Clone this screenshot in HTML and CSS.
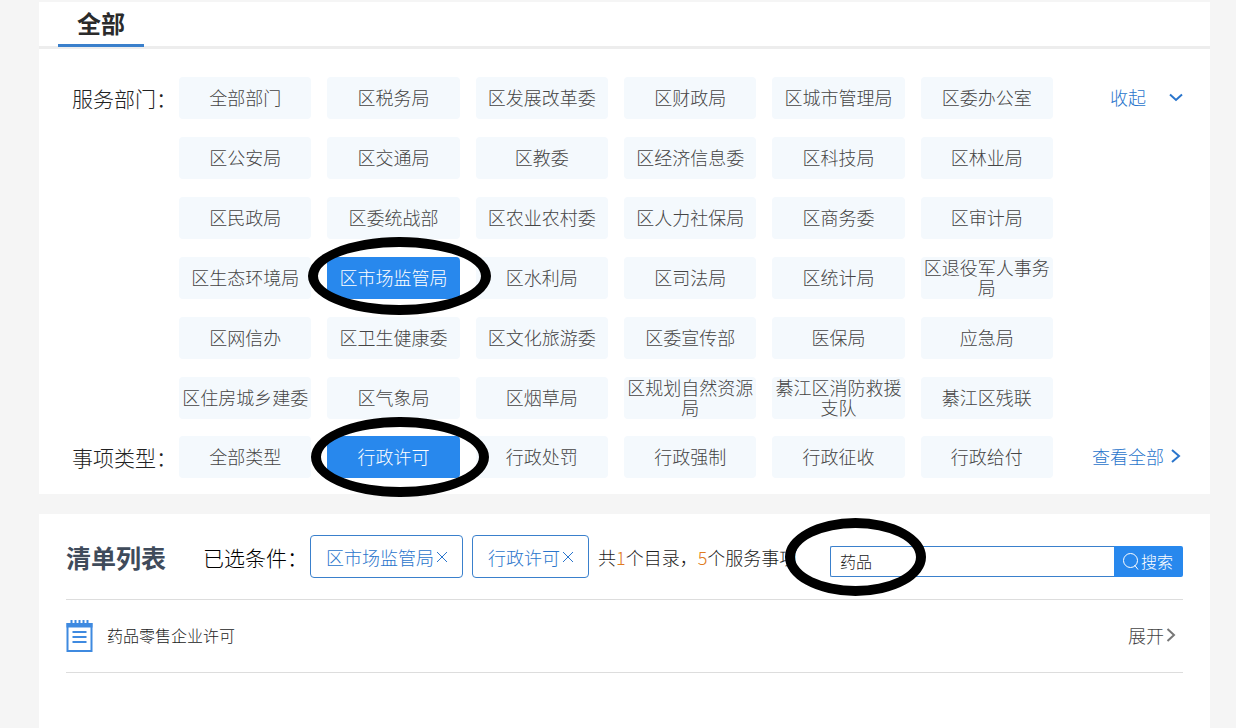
FILE: index.html
```html
<!DOCTYPE html>
<html lang="zh-CN">
<head>
  <meta charset="UTF-8" />
  <meta name="viewport" content="width=device-width, initial-scale=1" />
  <title>服务事项清单</title>
  <link rel="stylesheet" href="styles.css">
</head>
<body>
  <section class="panel">
    <nav class="tabs">
      <a href="#" class="tab">全部</a>
    </nav>

    <div class="filters">
      <div class="filter-row">
        <div class="filter-label">服务部门：</div>
        <div class="chips">
          <button class="chip">全部部门</button>
          <button class="chip">区税务局</button>
          <button class="chip">区发展改革委</button>
          <button class="chip">区财政局</button>
          <button class="chip">区城市管理局</button>
          <button class="chip">区委办公室</button>
          <button class="chip">区公安局</button>
          <button class="chip">区交通局</button>
          <button class="chip">区教委</button>
          <button class="chip">区经济信息委</button>
          <button class="chip">区科技局</button>
          <button class="chip">区林业局</button>
          <button class="chip">区民政局</button>
          <button class="chip">区委统战部</button>
          <button class="chip">区农业农村委</button>
          <button class="chip">区人力社保局</button>
          <button class="chip">区商务委</button>
          <button class="chip">区审计局</button>
          <button class="chip">区生态环境局</button>
          <button class="chip active mark mark-dept">区市场监管局</button>
          <button class="chip">区水利局</button>
          <button class="chip">区司法局</button>
          <button class="chip">区统计局</button>
          <button class="chip">区退役军人事务局</button>
          <button class="chip">区网信办</button>
          <button class="chip">区卫生健康委</button>
          <button class="chip">区文化旅游委</button>
          <button class="chip">区委宣传部</button>
          <button class="chip">医保局</button>
          <button class="chip">应急局</button>
          <button class="chip">区住房城乡建委</button>
          <button class="chip">区气象局</button>
          <button class="chip">区烟草局</button>
          <button class="chip">区规划自然资源局</button>
          <button class="chip">綦江区消防救援支队</button>
          <button class="chip">綦江区残联</button>
        </div>
        <a href="#" class="more more-fold">收起
          <svg width="14" height="14" viewBox="0 0 14 14"><path d="M1 4.500L7 10L13 4.500" /></svg>
        </a>
      </div>

      <div class="filter-row">
        <div class="filter-label">事项类型：</div>
        <div class="chips">
          <button class="chip">全部类型</button>
          <button class="chip active mark mark-type">行政许可</button>
          <button class="chip">行政处罚</button>
          <button class="chip">行政强制</button>
          <button class="chip">行政征收</button>
          <button class="chip">行政给付</button>
        </div>
        <a href="#" class="more">查看全部
          <svg width="14" height="14" viewBox="0 0 14 14"><path d="M3 1L10 7L3 13" /></svg>
        </a>
      </div>
    </div>
  </section>

  <section class="panel list-panel">
    <div class="list-head">
      <h2>清单列表</h2>
      <span class="selected-label">已选条件：</span>
      <button class="tag">区市场监管局
        <svg width="12" height="12" viewBox="0 0 12 12"><path d="M1 1L11 11M11 1L1 11" /></svg>
      </button>
      <button class="tag">行政许可
        <svg width="12" height="12" viewBox="0 0 12 12"><path d="M1 1L11 11M11 1L1 11" /></svg>
      </button>
      <span class="count">共<em>1</em>个目录，<em>5</em>个服务事项</span>
      <form class="search mark mark-search">
        <input type="text" value="药品" aria-label="搜索关键词">
        <button type="button">
          <svg width="18" height="18" viewBox="0 0 18 18"><circle cx="8.5" cy="8.5" r="7" /><path d="M12.500 13L16 17.500" /></svg>搜索
        </button>
      </form>
    </div>

    <div class="item">
      <svg class="item-icon" width="28" height="34" viewBox="0 0 28 34">
        <path d="M1.500 5H25.500V32H1.500Z" />
        <path class="top" d="M0.500 4H26.500V8.500H0.500Z" />
        <path class="rings" d="M5.500 1V7M9.500 1V7M13.500 1V7M17.500 1V7M21.500 1V7" />
        <path d="M6.500 13H20.500M6.500 18H20.500M6.500 23H20.500" />
      </svg>
      <a href="#" class="item-name">药品零售企业许可</a>
      <a href="#" class="expand">展开
        <svg width="10" height="14" viewBox="0 0 10 14"><path d="M1.500 1L8 7L1.500 13" /></svg>
      </a>
    </div>
  </section>
</body>
</html>
```

FILE: styles.css
```css
*, *::after {
  box-sizing: border-box;
}
body {
  margin: 0;
  padding: 2px 26px 0 39px;
  background: #f5f5f5;
  font-family: "Noto Sans CJK SC", sans-serif;
  font-weight: 300;
  font-size: 18px;
  color: #222;
}
a {
  text-decoration: none;
}
button, input {
  font: inherit;
}
button {
  cursor: pointer;
}
svg {
  flex: none;
  fill: none;
  stroke: currentColor;
}
.panel {
  background: #fff;
}

/* tabs */
.tabs {
  display: flex;
  height: 47px;
  padding-left: 19px;
  border-bottom: 3px solid #ededed;
}
.tab {
  height: 45px;
  padding: 0 19px;
  border-bottom: 3px solid #3a80cc;
  font-size: 24px;
  font-weight: bold;
  line-height: 42px;
  color: #2b2b2b;
}

/* filters */
.filters {
  display: flex;
  flex-direction: column;
  gap: 17px;
  padding: 28px 26px 16px 33px;
}
.filter-row {
  display: flex;
  align-items: flex-start;
}
.filter-label {
  width: 107px;
  font-size: 21px;
  line-height: 42px;
  white-space: nowrap;
}
.chips {
  flex: 1;
  display: grid;
  grid-template-columns: repeat(6, 1fr);
  gap: 18px 16px;
}
.chip {
  height: 42px;
  padding: 0 2px 3px;
  border: 0;
  border-radius: 4px;
  background: #f4f9fd;
  color: #444;
  line-height: 20px;
}
.chip.active {
  background: #2888ed;
  color: #fff;
}
.more {
  display: flex;
  justify-content: flex-end;
  align-items: center;
  gap: 5px;
  width: 131px;
  height: 42px;
  padding: 0 1px 3px 0;
  color: #2a75cc;
}
.more-fold {
  gap: 23px;
}
.more svg {
  stroke-width: 2;
}

/* circles drawn round the picked options */
.mark {
  position: relative;
}
.mark::after {
  content: "";
  position: absolute;
  z-index: 1;
  border: 10px solid #000;
  border-radius: 50%;
  pointer-events: none;
}
.mark-dept::after {
  inset: -20px -31px -16px -19px;
}
.mark-type::after {
  inset: -19px -29px -19px -16px;
}
.mark-search::after {
  top: -28px;
  left: -45px;
  width: 141px;
  height: 78px;
}

/* list */
.list-panel {
  min-height: 214px;
  margin-top: 20px;
  padding: 0 27px;
}
.list-head {
  display: flex;
  align-items: center;
  height: 86px;
  border-bottom: 1px solid #ddd;
  white-space: nowrap;
}
.list-head h2 {
  margin: 0 37px 0 0;
  font-size: 25px;
  color: #3f4b5b;
}
.selected-label {
  width: 107px;
  font-size: 21px;
  color: #000;
}
.tag {
  display: flex;
  align-items: center;
  gap: 2px;
  height: 43px;
  margin-right: 9px;
  padding: 0 14px 0 15px;
  border: 1px solid #3a80cc;
  border-radius: 4px;
  background: #fff;
  color: #2a75cc;
}
.count em {
  font-style: normal;
  color: #e07a20;
}
.search {
  display: flex;
  width: 353px;
  height: 31px;
  margin: 9px 0 0 auto;
  font-size: 16px;
}
.search input {
  flex: 1;
  min-width: 0;
  padding: 0 9px;
  border: 1px solid #3a80cc;
  border-right: 0;
  border-radius: 2px 0 0 2px;
  color: #222;
}
.search button {
  display: flex;
  align-items: center;
  gap: 1px;
  width: 69px;
  padding: 0 8px;
  border: 0;
  border-radius: 0 2px 2px 0;
  background: #2888ed;
  color: #fff;
}
.item {
  display: flex;
  align-items: center;
  height: 73px;
  padding-bottom: 2px;
  border-bottom: 1px solid #ddd;
}
.item-icon {
  margin-top: 2px;
  color: #3f8ae0;
  stroke-width: 2;
}
.item-icon .top {
  fill: currentColor;
  stroke: none;
}
.item-name {
  margin-left: 13px;
  font-size: 16px;
  color: #222;
}
.expand {
  display: flex;
  align-items: center;
  gap: 2px;
  margin: 0 7px 0 auto;
  color: #444;
}
.expand svg {
  stroke-width: 2;
  color: #777;
}
```
